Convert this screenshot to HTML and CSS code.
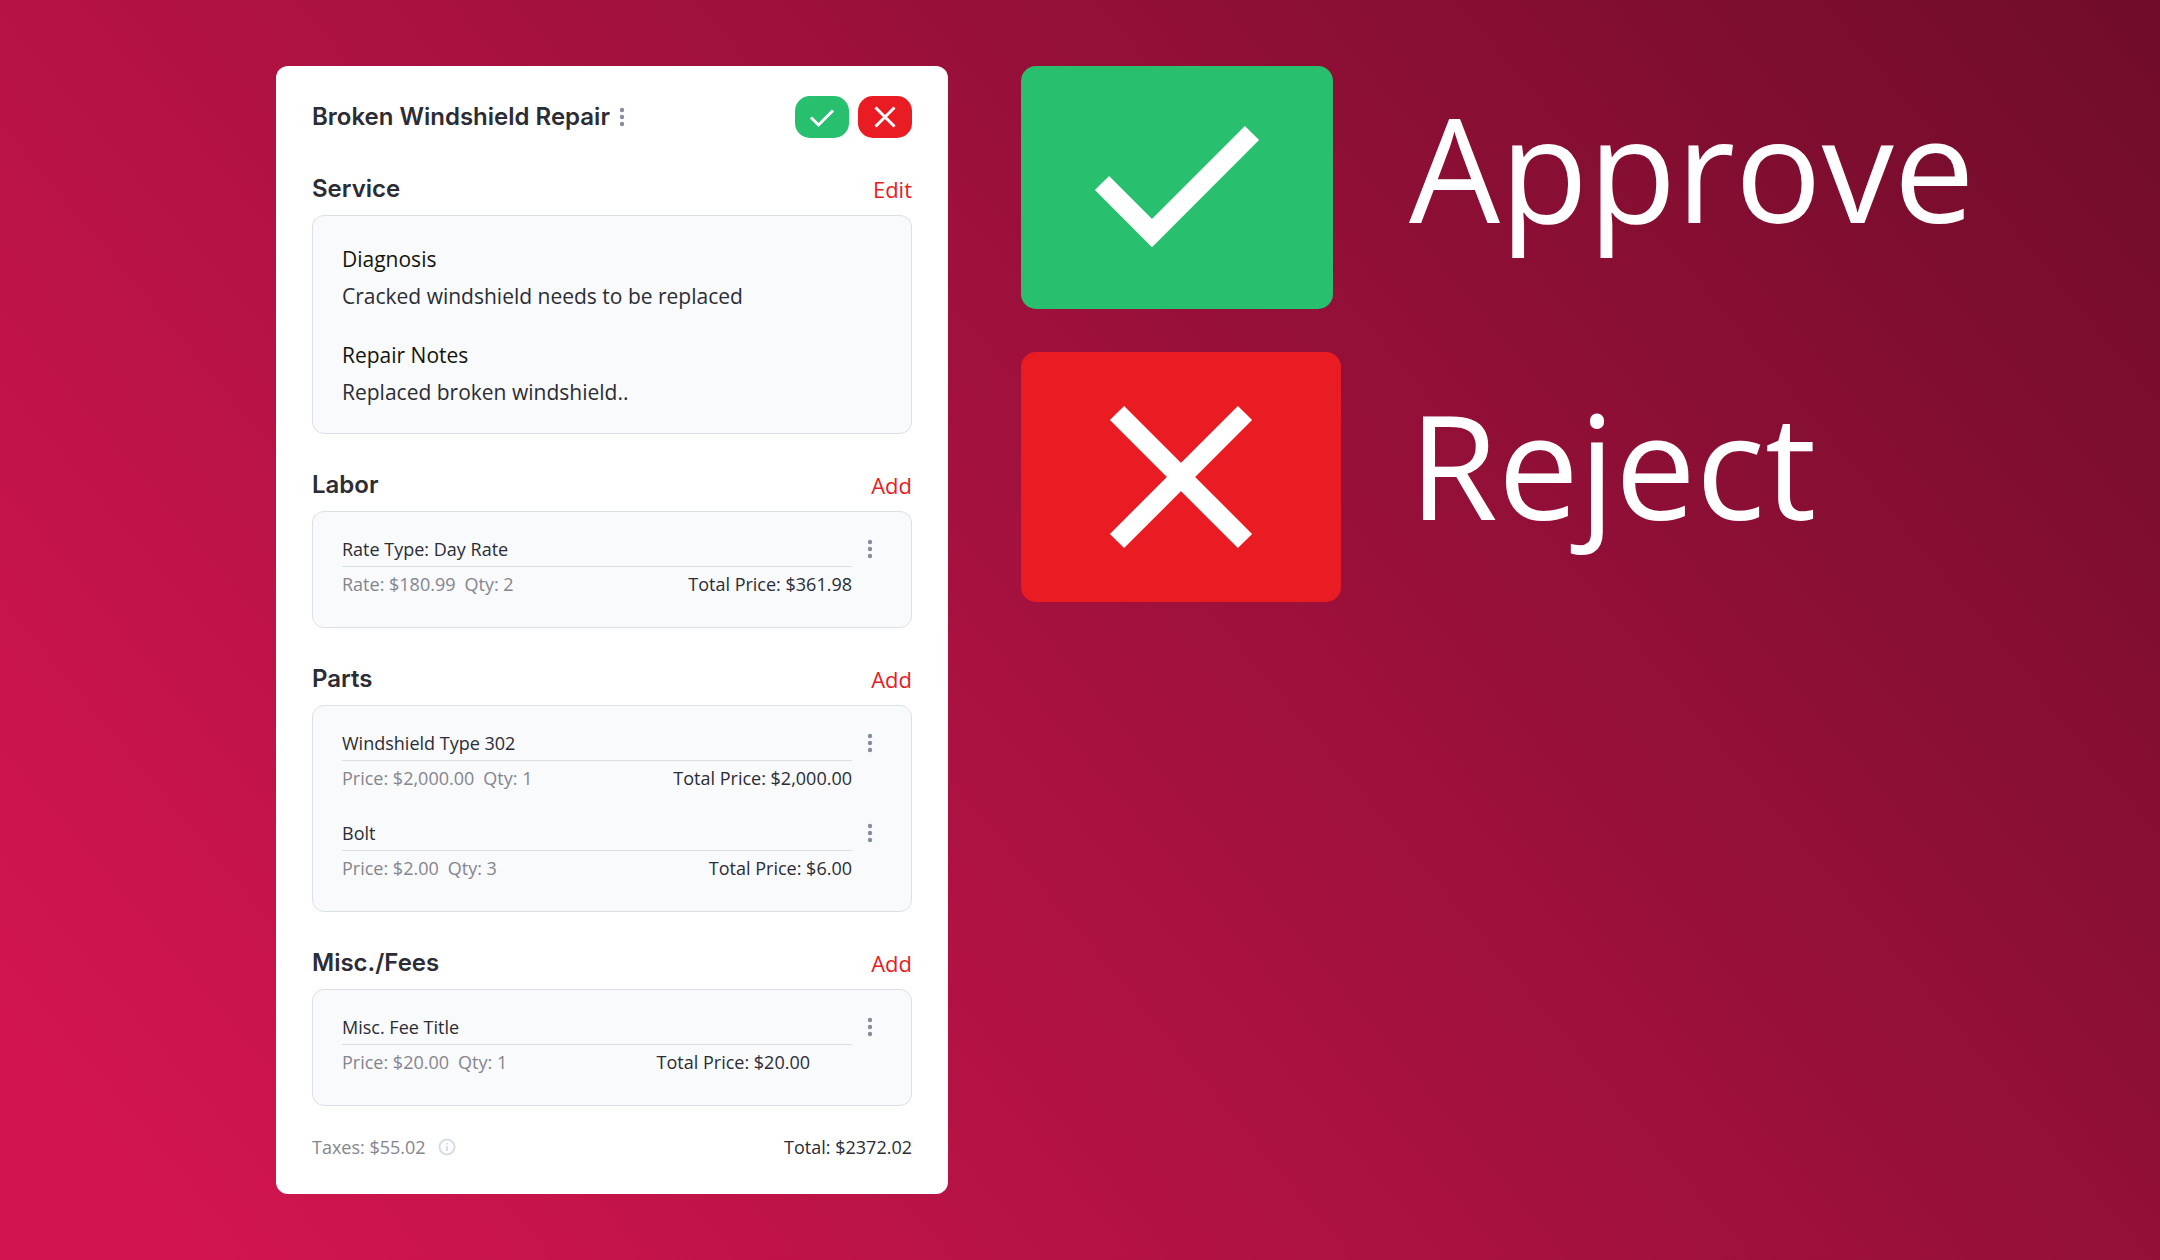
FILE: index.html
```html
<!DOCTYPE html>
<html lang="en">

<head>
    <meta charset="UTF-8">
    <meta name="viewport" content="width=device-width, initial-scale=1.0">
    <title>Broken Windshield Repair</title>
    <link rel="stylesheet" href="styles.css">
</head>

<body>
    <!-- shared icons -->
    <svg class="sprite" aria-hidden="true">
        <symbol id="dots" viewBox="0 0 24 24">
            <circle cx="12" cy="5" r="2.2" />
            <circle cx="12" cy="12" r="2.2" />
            <circle cx="12" cy="19" r="2.2" />
        </symbol>
    </svg>

    <main class="page">
        <article class="card">
            <header class="card-header">
                <h1>Broken Windshield Repair</h1>
                <button class="menu" aria-label="Repair options"><svg><use href="#dots" /></svg></button>
                <div class="actions">
                    <button class="action approve" aria-label="Approve">
                        <svg width="26" height="26" viewBox="0 0 26 26"><path d="M2 13.5L9.5 21L24 6.5" /></svg>
                    </button>
                    <button class="action reject" aria-label="Reject">
                        <svg width="26" height="26" viewBox="0 0 26 26"><path d="M3.5 3.5L22.5 22.5M22.5 3.5L3.5 22.5" /></svg>
                    </button>
                </div>
            </header>

            <section class="section">
                <div class="section-head">
                    <h2>Service</h2>
                    <a href="#">Edit</a>
                </div>
                <div class="box notes">
                    <div>
                        <h3>Diagnosis</h3>
                        <p>Cracked windshield needs to be replaced</p>
                    </div>
                    <div>
                        <h3>Repair Notes</h3>
                        <p>Replaced broken windshield..</p>
                    </div>
                </div>
            </section>

            <section class="section">
                <div class="section-head">
                    <h2>Labor</h2>
                    <a href="#">Add</a>
                </div>
                <div class="box items">
                    <div class="item">
                        <div class="item-main">
                            <h3>Rate Type: Day Rate</h3>
                            <div class="item-price">
                                <span>Rate: $180.99</span>
                                <span>Qty: 2</span>
                                <span class="total">Total Price: $361.98</span>
                            </div>
                        </div>
                        <button class="menu" aria-label="Labor options"><svg><use href="#dots" /></svg></button>
                    </div>
                </div>
            </section>

            <section class="section">
                <div class="section-head">
                    <h2>Parts</h2>
                    <a href="#">Add</a>
                </div>
                <div class="box items">
                    <div class="item">
                        <div class="item-main">
                            <h3>Windshield Type 302</h3>
                            <div class="item-price">
                                <span>Price: $2,000.00</span>
                                <span>Qty: 1</span>
                                <span class="total">Total Price: $2,000.00</span>
                            </div>
                        </div>
                        <button class="menu" aria-label="Windshield options"><svg><use href="#dots" /></svg></button>
                    </div>
                    <div class="item">
                        <div class="item-main">
                            <h3>Bolt</h3>
                            <div class="item-price">
                                <span>Price: $2.00</span>
                                <span>Qty: 3</span>
                                <span class="total">Total Price: $6.00</span>
                            </div>
                        </div>
                        <button class="menu" aria-label="Bolt options"><svg><use href="#dots" /></svg></button>
                    </div>
                </div>
            </section>

            <section class="section">
                <div class="section-head">
                    <h2>Misc./Fees</h2>
                    <a href="#">Add</a>
                </div>
                <div class="box items">
                    <div class="item">
                        <div class="item-main">
                            <h3>Misc. Fee Title</h3>
                            <div class="item-price fee">
                                <span>Price: $20.00</span>
                                <span>Qty: 1</span>
                                <span class="total">Total Price: $20.00</span>
                            </div>
                        </div>
                        <button class="menu" aria-label="Fee options"><svg><use href="#dots" /></svg></button>
                    </div>
                </div>
            </section>

            <footer class="card-footer">
                <span>Taxes: $55.02</span>
                <svg class="info" width="18" height="18" viewBox="0 0 18 18">
                    <circle cx="9" cy="9" r="7.5" />
                    <path d="M9 8V13M9 5V6.5" />
                </svg>
                <span class="total">Total: $2372.02</span>
            </footer>
        </article>

        <div class="legend">
            <div class="tiles">
                <div class="tile approve">
                    <svg viewBox="0 0 312 243"><path d="M81 117L131 167L231 67" /></svg>
                </div>
                <div class="tile reject">
                    <svg viewBox="0 0 320 250"><path d="M96 61L224 189M224 61L96 189" /></svg>
                </div>
            </div>
            <div class="labels">
                <p>Approve</p>
                <p>Reject</p>
            </div>
        </div>
    </main>
</body>

</html>
```
FILE: styles.css
```css
* {
    box-sizing: border-box;
}

body {
    margin: 0;
    min-height: 100vh;
    font-family: 'Open Sans', sans-serif;
    font-size: 18px;
    line-height: 24px;
    color: #2b2c35;
    background: linear-gradient(50deg, #d2154f 0%, #d2154f 6%, #8e0f36 71%, #6f0c29 100%);
}

h1,
h2,
h3,
p {
    margin: 0;
}

button {
    border: none;
    padding: 0;
    background: none;
    cursor: pointer;
}

.sprite {
    position: absolute;
    width: 0;
    height: 0;
}

.page {
    display: flex;
    align-items: flex-start;
    gap: 73px;
    padding: 66px 60px 66px 276px;
}

/* repair card */
.card {
    flex: 0 1 672px;
    padding: 30px 36px 35px;
    border-radius: 12px;
    background-color: #fff;
}

.card-header {
    display: flex;
    align-items: center;
    margin-bottom: 35px;
}

h1,
h2 {
    font-family: 'Inter', sans-serif;
    font-size: 24px;
    font-weight: 600;
    line-height: 32px;
}

.menu {
    width: 24px;
    height: 24px;
    fill: #868d9b;
}

.menu svg {
    display: block;
    width: 24px;
    height: 24px;
}

.actions {
    display: flex;
    gap: 9px;
    margin-left: auto;
}

.action {
    display: flex;
    align-items: center;
    justify-content: center;
    width: 54px;
    height: 42px;
    border-radius: 15px;
    fill: none;
    stroke: #fff;
    stroke-width: 3;
}

.approve {
    background-color: #28bf6e;
}

.reject {
    background-color: #e91c23;
}

.section {
    margin-bottom: 35px;
}

.section-head {
    display: flex;
    align-items: center;
    justify-content: space-between;
    margin-bottom: 10px;
}

.section-head a {
    font-size: 22px;
    line-height: 32px;
    color: #e91c23;
    text-decoration: none;
}

.box {
    display: flex;
    flex-direction: column;
    border: 1px solid #dbe0e6;
    border-radius: 12px;
    background-color: #f9fafc;
}

.notes {
    gap: 33px;
    padding: 30px 29px 28px;
    font-size: 21px;
    line-height: 26px;
}

.notes h3 {
    margin-bottom: 11px;
    font-size: 21px;
    font-weight: 500;
    color: #14150a;
}

.items {
    gap: 31px;
    padding: 25px 29px 31px;
}

.item {
    display: flex;
    gap: 6px;
}

.item-main {
    flex: 1;
}

.item h3 {
    padding-bottom: 5px;
    border-bottom: 1px solid #d9e0e7;
    font-size: 18px;
    font-weight: 500;
}

.item-price {
    display: flex;
    gap: 9px;
    padding-top: 5px;
    color: #85858f;
}

.total {
    margin-left: auto;
    font-weight: 500;
    color: #2b2c35;
}

.fee .total {
    margin-right: 42px;
}

.card-footer {
    display: flex;
    align-items: center;
    margin-top: -6px;
    color: #85858f;
}

.info {
    margin-left: 12px;
    fill: none;
    stroke: #d5dde5;
    stroke-width: 2;
}

/* approve / reject legend */
.legend {
    display: flex;
    gap: 68px;
}

.tiles {
    display: flex;
    flex-direction: column;
    align-items: flex-start;
    gap: 43px;
}

.tile {
    width: 312px;
    border-radius: 15px;
}

.tile.reject {
    width: 320px;
}

.tile svg {
    display: block;
    fill: none;
    stroke: #fff;
    stroke-width: 20;
}

.labels {
    display: flex;
    flex-direction: column;
    gap: 117px;
    padding-top: 11px;
    font-size: 144px;
    line-height: 180px;
    color: #fff;
}
```
